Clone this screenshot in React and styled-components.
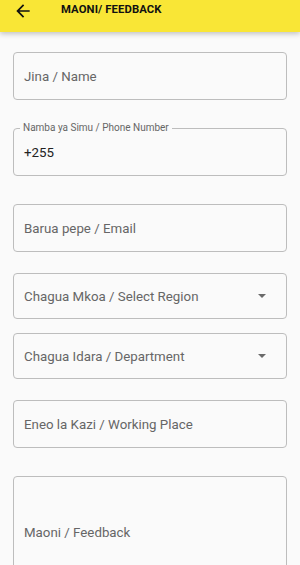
import React from "react"
import styled, { createGlobalStyle } from "styled-components"

const GlobalStyle = createGlobalStyle`
  html, body {
    margin: 0;
    padding: 0;
    height: 565px;
    overflow: hidden;
    background: #fafafa;
    font-family: Roboto, "Noto Sans", sans-serif;
  }
`

const Page = styled.div`
  width: 300px;
  height: 565px;
  overflow: hidden;
  background: #fafafa;
`

const AppBar = styled.div`
  height: 32px;
  background: #f9e636;
  display: flex;
  align-items: flex-start;
  box-shadow: 0 2px 5px rgba(0, 0, 0, 0.22);
  position: relative;
  z-index: 1;
`

const BackButton = styled.div`
  width: 61px;
  padding: 1px 0 0 13px;
  box-sizing: border-box;
`

const Title = styled.div`
  font-size: 11.3px;
  font-weight: 700;
  color: #111;
  padding-top: 3px;
  letter-spacing: 0.1px;
`

const Form = styled.div`
  padding: 20px 13px 0 13px;
  display: flex;
  flex-direction: column;
`

const Field = styled.div`
  position: relative;
  height: ${(p) => p.h || 48}px;
  margin-top: ${(p) => p.mt || 0}px;
  border: 1px solid #bdbdbd;
  border-radius: 4px;
  box-sizing: border-box;
  display: flex;
  align-items: center;
  justify-content: space-between;
  padding: 0 20px 0 10px;
`

const Placeholder = styled.span`
  font-size: 13.3px;
  color: #666;
`

const Value = styled.span`
  font-size: 13.3px;
  color: #222;
`

const FloatLabel = styled.span`
  position: absolute;
  top: -7px;
  left: 6px;
  padding: 0 3px;
  background: #fafafa;
  font-size: 10px;
  color: #666;
  line-height: 12px;
`

const Caret = styled.span`
  width: 0;
  height: 0;
  border-left: 4px solid transparent;
  border-right: 4px solid transparent;
  border-top: 4px solid #6a6a6a;
`

const App = () => {
  return (
    <Page>
      <GlobalStyle />
      <AppBar>
        <BackButton>
          <svg width="20" height="20" viewBox="0 0 24 24">
            <path d="M20 11H7.83l5.59-5.59L12 4l-8 8 8 8 1.41-1.41L7.83 13H20v-2z" fill="#111" />
          </svg>
        </BackButton>
        <Title>MAONI/ FEEDBACK</Title>
      </AppBar>
      <Form>
        <Field>
          <Placeholder>Jina / Name</Placeholder>
        </Field>
        <Field mt={28}>
          <FloatLabel>Namba ya Simu / Phone Number</FloatLabel>
          <Value>+255</Value>
        </Field>
        <Field mt={28}>
          <Placeholder>Barua pepe / Email</Placeholder>
        </Field>
        <Field mt={21} h={46}>
          <Placeholder>Chagua Mkoa / Select Region</Placeholder>
          <Caret />
        </Field>
        <Field mt={14} h={46}>
          <Placeholder>Chagua Idara / Department</Placeholder>
          <Caret />
        </Field>
        <Field mt={21}>
          <Placeholder>Eneo la Kazi / Working Place</Placeholder>
        </Field>
        <Field mt={28} h={112}>
          <Placeholder>Maoni / Feedback</Placeholder>
        </Field>
      </Form>
    </Page>
  )
}

export default App
